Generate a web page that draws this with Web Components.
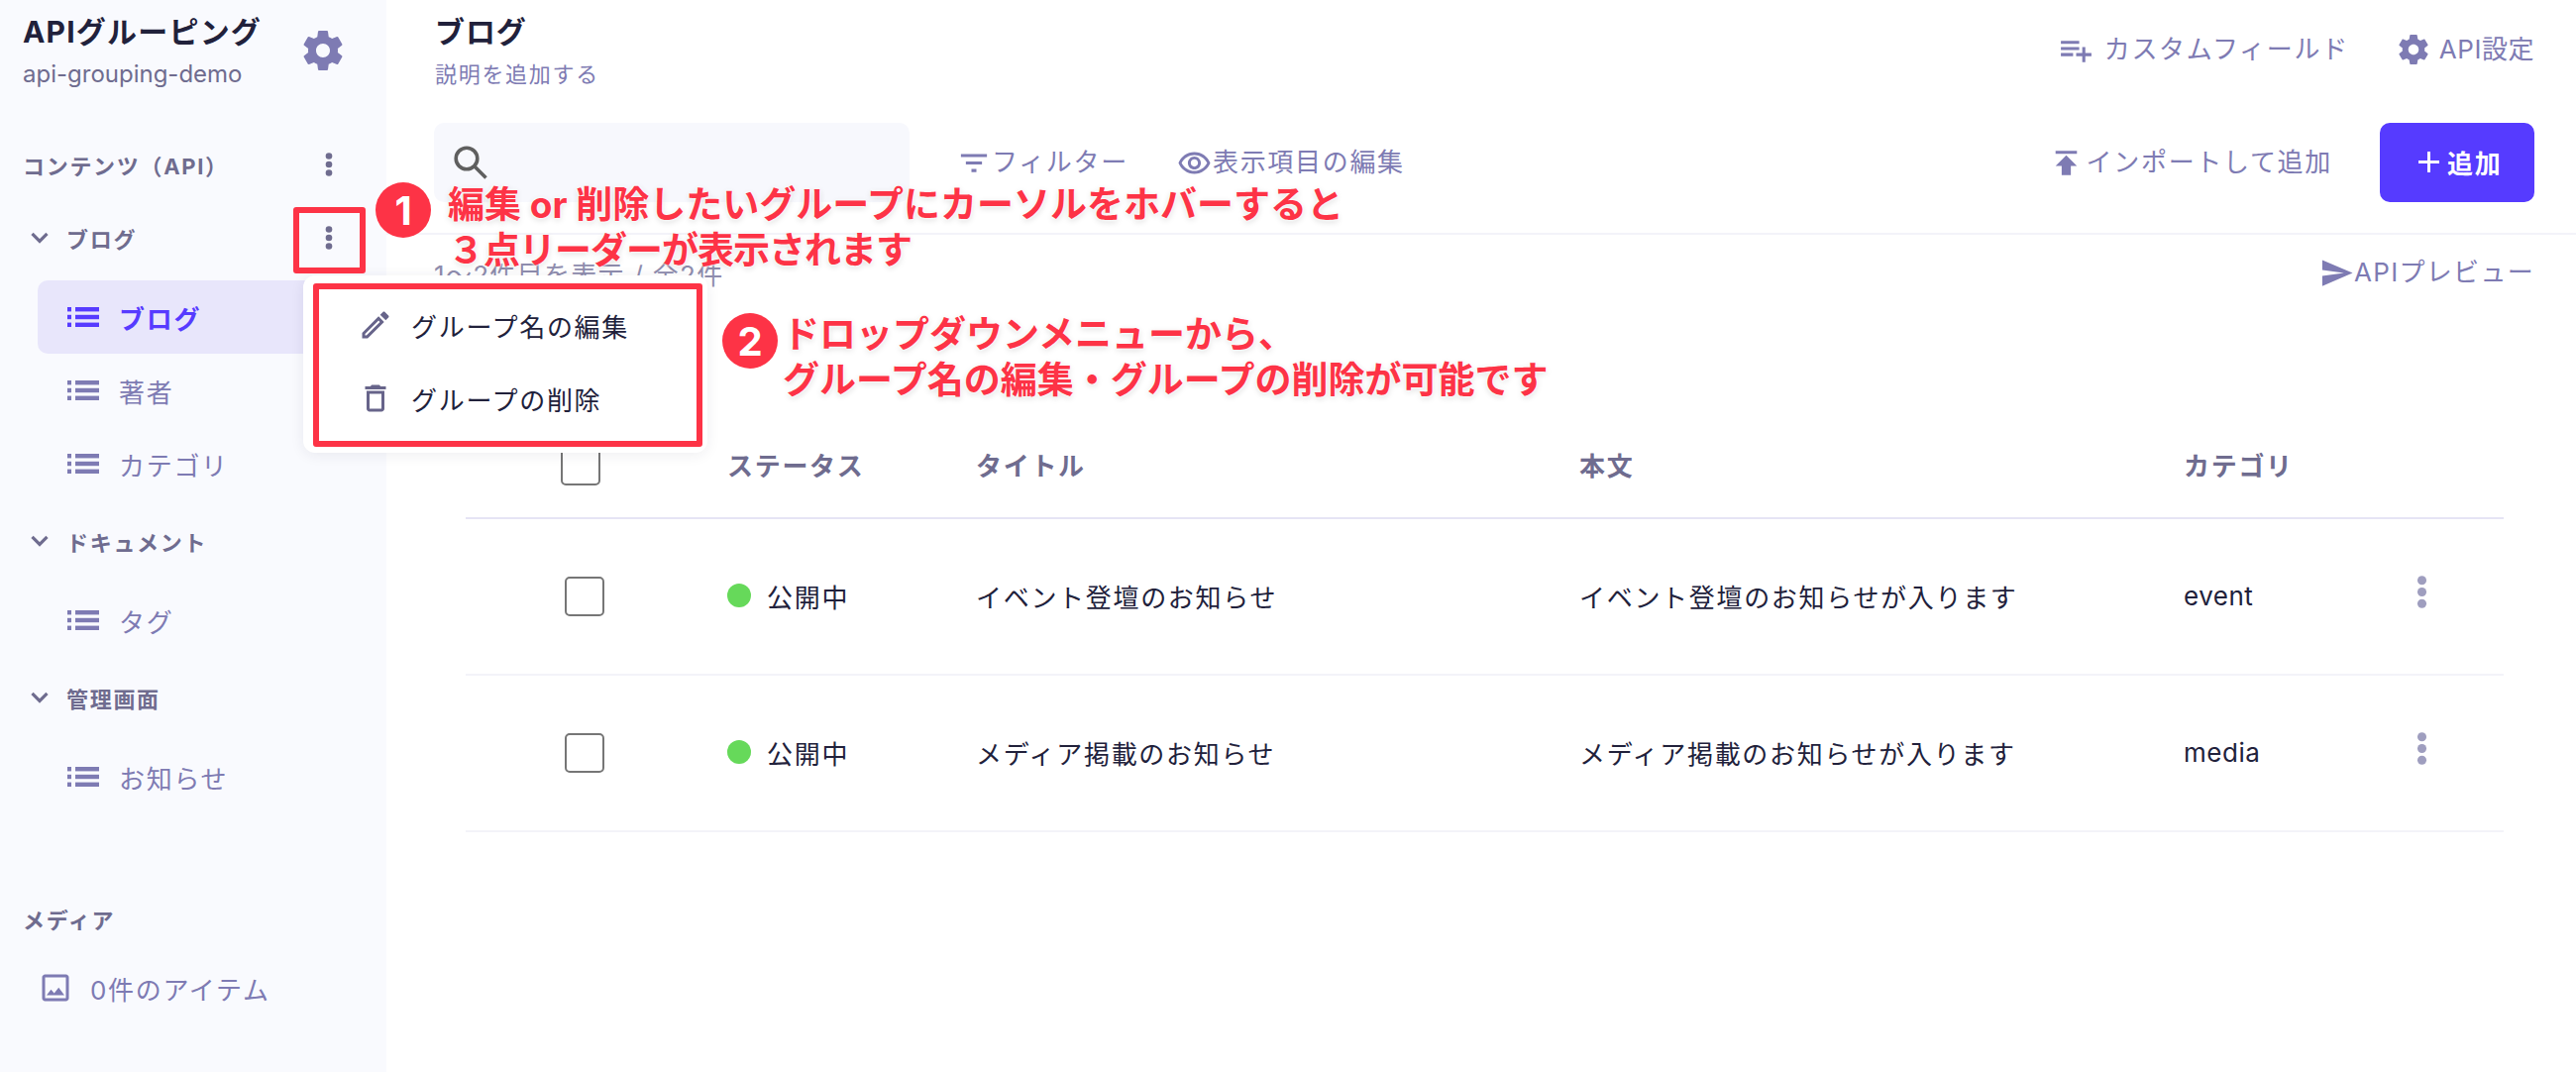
<!DOCTYPE html>
<html lang="ja">
<head>
<meta charset="utf-8">
<title>ブログ</title>
<style>
  html, body { margin: 0; height: 100%; }
  body {
    background: #fff;
    color: #21213b;
    font-family: Inter, "Noto Sans CJK JP", sans-serif;
    font-size: 26px;
    letter-spacing: .065em;
    overflow: hidden;
  }
</style>
</head>
<body>
<app-shell>
  <api-sidebar slot="side"></api-sidebar>
  <page-head slot="main"></page-head>
  <list-toolbar slot="main"></list-toolbar>
  <list-meta slot="main"></list-meta>
  <content-table slot="main"></content-table>

  <group-menu slot="over"></group-menu>
  <red-frame slot="over" style="left:296px;top:209px;width:73px;height:67px"></red-frame>
  <red-frame slot="over" style="left:316px;top:286px;width:393px;height:165px"></red-frame>
  <step-badge slot="over" style="left:379px;top:184px">1</step-badge>
  <step-badge slot="over" style="left:729px;top:316px">2</step-badge>
  <call-out slot="over" style="left:452px;top:184px">編集 or 削除したいグループにカーソルをホバーすると<br><span style="letter-spacing:-1px">３点リーダーが表示されます</span></call-out>
  <call-out slot="over" style="left:790px;top:315px">ドロップダウンメニューから、<br>グループ名の編集・グループの削除が可能です</call-out>
</app-shell>

<script>
const ICONS = {
  gear: '<path d="M19.43 12.98c.04-.32.07-.64.07-.98s-.03-.66-.07-.98l2.11-1.65c.19-.15.24-.42.12-.64l-2-3.46c-.12-.22-.39-.3-.61-.22l-2.49 1c-.52-.4-1.08-.73-1.69-.98l-.38-2.65C14.46 2.18 14.25 2 14 2h-4c-.25 0-.46.18-.49.42l-.38 2.65c-.61.25-1.17.59-1.69.98l-2.49-1c-.23-.09-.49 0-.61.22l-2 3.46c-.13.22-.07.49.12.64l2.11 1.65c-.04.32-.07.65-.07.98s.03.66.07.98l-2.11 1.65c-.19.15-.24.42-.12.64l2 3.46c.12.22.39.3.61.22l2.49-1c.52.4 1.08.73 1.69.98l.38 2.65c.03.24.24.42.49.42h4c.25 0 .46-.18.49-.42l.38-2.65c.61-.25 1.17-.59 1.69-.98l2.49 1c.23.09.49 0 .61-.22l2-3.46c.12-.22.07-.49-.12-.64l-2.11-1.65zM12 15.5c-1.93 0-3.5-1.57-3.5-3.5s1.57-3.5 3.5-3.5 3.5 1.57 3.5 3.5-1.57 3.5-3.5 3.5z"/>',
  eye: '<path d="M12 6.5c3.79 0 7.17 2.13 8.82 5.5-1.65 3.37-5.02 5.5-8.82 5.5S4.83 15.37 3.18 12C4.83 8.63 8.21 6.5 12 6.5m0-2C7 4.5 2.73 7.61 1 12c1.73 4.39 6 7.5 11 7.5s9.27-3.11 11-7.5c-1.73-4.39-6-7.5-11-7.5zm0 5c1.38 0 2.5 1.12 2.5 2.5s-1.12 2.5-2.5 2.5-2.5-1.12-2.5-2.5 1.12-2.5 2.5-2.5m0-2c-2.48 0-4.5 2.02-4.5 4.5s2.02 4.5 4.5 4.5 4.5-2.02 4.5-4.5-2.02-4.5-4.5-4.5z"/>',
  fields: '<path d="M14 10H2v2h12v-2zm0-4H2v2h12V6zm4 8v-4h-2v4h-4v2h4v4h2v-4h4v-2h-4zM2 16h8v-2H2v2z"/>',
  publish: '<path d="M5 4v2h14V4H5zm0 10h4v6h6v-6h4l-7-7-7 7z"/>',
  send: '<path d="M2.01 21L23 12 2.01 3 2 10l15 2-15 2z"/>',
  pencil: '<path d="M14.06 9.02l.92.92L5.92 19H5v-.92l9.06-9.06M17.66 3c-.25 0-.51.1-.7.29l-1.83 1.83 3.75 3.75 1.83-1.83c.39-.39.39-1.02 0-1.41l-2.34-2.34c-.2-.2-.45-.29-.71-.29zm-3.6 3.19L3 17.25V21h3.75L17.81 9.94l-3.75-3.75z"/>',
  trash: '<path d="M16 9v10H8V9h8m-1.5-6h-5l-1 1H5v2h14V4h-3.5l-1-1zM18 7H6v12c0 1.1.9 2 2 2h8c1.1 0 2-.9 2-2V7z"/>',
  image: '<path d="M19 5v14H5V5h14m0-2H5c-1.1 0-2 .9-2 2v14c0 1.1.9 2 2 2h14c1.1 0 2-.9 2-2V5c0-1.1-.9-2-2-2z"/><path d="M14.14 11.86l-3 3.87L9 13.14 6 17h12l-3.86-5.14z"/>',
  filter: '<path d="M1.5 5.2h21v2.4h-21zM5.5 11.2h13v2.4h-13zM10 17.2h4v2.6h-4z"/>'
}

class UiIcon extends HTMLElement {
  constructor () {
    super()
    this.shadow = this.attachShadow({ mode: 'open' })
  }

  connectedCallback () {
    const size = this.getAttribute('size') || 36
    this.shadow.innerHTML = `
      <style>
        :host { display: inline-flex; flex: none; color: inherit; }
        svg { display: block; fill: currentColor; }
      </style>
      <svg width="${size}" height="${size}" viewBox="0 0 24 24">${ICONS[this.getAttribute('name')]}</svg>`
  }
}

class KebabDots extends HTMLElement {
  constructor () {
    super()
    this.attachShadow({ mode: 'open' }).innerHTML = `
      <style>
        :host { display: block; flex: none; width: 8px; height: 24px; }
        svg { display: block; width: 100%; height: 100%; fill: currentColor; }
      </style>
      <svg viewBox="0 0 8 24">
        <circle cx="4" cy="3.5" r="3.3"/><circle cx="4" cy="12" r="3.3"/><circle cx="4" cy="20.5" r="3.3"/>
      </svg>`
  }
}

class AppShell extends HTMLElement {
  constructor () {
    super()
    this.attachShadow({ mode: 'open' }).innerHTML = `
      <style>
        :host { display: grid; grid-template-columns: 390px 1fr; height: 1082px; position: relative; }
        main { display: flex; flex-direction: column; min-width: 0; }
      </style>
      <slot name="side"></slot>
      <main><slot name="main"></slot></main>
      <slot name="over"></slot>`
  }
}

class ApiSidebar extends HTMLElement {
  constructor () {
    super()
    this.attachShadow({ mode: 'open' }).innerHTML = `
      <style>
        :host { display: block; background: #f9fafe; height: 1082px; }
        .head { display: flex; justify-content: space-between; align-items: center; padding: 12px 40px 0 23px; height: 81px; margin-bottom: 43px; }
        .name { font-size: 30px; font-weight: 700; line-height: 40px; color: #21213b; letter-spacing: .04em; }
        .id { font-size: 24px; line-height: 36px; margin-top: 5px; color: #6f6c8f; letter-spacing: 0; }
        .head ui-icon { color: #7e7bb3; margin-top: -4px; }
        .first { margin-top: 14px; }
        .media { margin-top: 76px; }
      </style>
      <div class="head">
        <div><div class="name">APIグルーピング</div><div class="id">api-grouping-demo</div></div>
        <ui-icon name="gear" size="48"></ui-icon>
      </div>
      <side-heading kebab>コンテンツ（API）</side-heading>
      <side-group class="first" label="ブログ" kebab>
        <side-item active>ブログ</side-item>
        <side-item>著者</side-item>
        <side-item>カテゴリ</side-item>
      </side-group>
      <side-group label="ドキュメント">
        <side-item>タグ</side-item>
      </side-group>
      <side-group label="管理画面">
        <side-item>お知らせ</side-item>
      </side-group>
      <side-heading class="media">メディア</side-heading>
      <media-link>0件のアイテム</media-link>`
  }
}

class SideHeading extends HTMLElement {
  constructor () {
    super()
    this.shadow = this.attachShadow({ mode: 'open' })
  }

  connectedCallback () {
    this.shadow.innerHTML = `
      <style>
        :host { display: flex; justify-content: space-between; align-items: center; height: 60px; padding: 0 54px 0 23px; font-size: 22px; font-weight: 700; color: #6f6c8f; }
      </style>
      <span><slot></slot></span>
      ${this.hasAttribute('kebab') ? '<kebab-dots></kebab-dots>' : ''}`
  }
}

class SideGroup extends HTMLElement {
  constructor () {
    super()
    this.shadow = this.attachShadow({ mode: 'open' })
  }

  connectedCallback () {
    this.shadow.innerHTML = `
      <style>
        :host { display: block; }
        .row { display: flex; align-items: center; height: 60px; padding: 0 54px 0 31px; font-size: 22px; font-weight: 700; color: #6f6c8f; }
        .row svg { flex: none; margin-right: 18px; }
        .row span { flex: 1; }
        .list { margin: 13px 0 11px; }
      </style>
      <div class="row">
        <svg width="18" height="12" viewBox="0 0 18 12"><path d="M1.5 1.8 9 9.4l7.5-7.6" fill="none" stroke="currentColor" stroke-width="3.2"/></svg>
        <span>${this.getAttribute('label')}</span>
        ${this.hasAttribute('kebab') ? '<kebab-dots></kebab-dots>' : ''}
      </div>
      <div class="list"><slot></slot></div>`
  }
}

class SideItem extends HTMLElement {
  constructor () {
    super()
    this.attachShadow({ mode: 'open' }).innerHTML = `
      <style>
        :host { display: flex; align-items: center; gap: 20px; height: 74px; margin: 0 20px 0 38px; padding-left: 30px; border-radius: 10px; color: #7e7bb3; }
        :host([active]) { background: #e8e6fb; color: #563bff; font-weight: 700; }
        svg { flex: none; display: block; fill: currentColor; }
      </style>
      <svg width="32" height="20" viewBox="0 0 32 20">
        <rect width="4" height="4.4"/><rect y="7.8" width="4" height="4.4"/><rect y="15.6" width="4" height="4.4"/>
        <rect x="8" width="24" height="4.4"/><rect x="8" y="7.8" width="24" height="4.4"/><rect x="8" y="15.6" width="24" height="4.4"/>
      </svg>
      <span><slot></slot></span>`
  }
}

class MediaLink extends HTMLElement {
  constructor () {
    super()
    this.attachShadow({ mode: 'open' }).innerHTML = `
      <style>
        :host { display: flex; align-items: center; gap: 17px; height: 74px; margin-top: 3px; padding-left: 38px; color: #7e7bb3; }
      </style>
      <ui-icon name="image" size="36"></ui-icon>
      <span><slot></slot></span>`
  }
}

class PageHead extends HTMLElement {
  constructor () {
    super()
    this.attachShadow({ mode: 'open' }).innerHTML = `
      <style>
        :host { display: flex; justify-content: space-between; height: 124px; box-sizing: border-box; padding: 12px 42px 0 49px; }
        h1 { margin: 0; font-size: 30px; line-height: 40px; font-weight: 700; color: #21213b; letter-spacing: .03em; }
        p { margin: 5px 0 0; font-size: 22px; line-height: 36px; color: #7e7bb3; }
        .links { display: flex; align-items: center; gap: 47px; height: 76px; color: #7e7bb3; }
        .tight { letter-spacing: .02em; }
      </style>
      <div><h1>ブログ</h1><p>説明を追加する</p></div>
      <div class="links">
        <icon-link icon="fields" size="37" gap="10">カスタムフィールド</icon-link>
        <icon-link class="tight" icon="gear" size="36" gap="8">API設定</icon-link>
      </div>`
  }
}

class IconLink extends HTMLElement {
  constructor () {
    super()
    this.shadow = this.attachShadow({ mode: 'open' })
  }

  connectedCallback () {
    this.shadow.innerHTML = `
      <style>
        :host { display: inline-flex; align-items: center; gap: ${this.getAttribute('gap') || 0}px; color: #7e7bb3; font-size: 26px; line-height: 36px; }
      </style>
      <ui-icon name="${this.getAttribute('icon')}" size="${this.getAttribute('size')}"></ui-icon>
      <span><slot></slot></span>`
  }
}

class ListToolbar extends HTMLElement {
  constructor () {
    super()
    this.attachShadow({ mode: 'open' }).innerHTML = `
      <style>
        :host { display: flex; align-items: center; box-sizing: content-box; height: 80px; padding: 0 42px 31px 48px; border-bottom: 2px solid #f3f3f9; }
        .search { width: 480px; height: 80px; box-sizing: border-box; padding-left: 20px; display: flex; align-items: center; background: #f7f8fd; border-radius: 10px; margin-right: 50px; }
        .filters { display: flex; gap: 49px; }
        .push { margin-left: auto; margin-right: 48px; }
        button { all: unset; box-sizing: border-box; width: 156px; height: 80px; padding: 0 0 2px 39px; display: flex; align-items: center; gap: 8px; background: #563bff; border-radius: 10px; color: #fff; font: inherit; font-weight: 700; }
        button svg { flex: none; }
      </style>
      <div class="search">
        <svg width="34" height="34" viewBox="0 0 34 34" fill="none" stroke="#5f5f5f" stroke-width="3.6"><circle cx="13" cy="13" r="10.8"/><path d="M21 21 32.5 32.5"/></svg>
      </div>
      <div class="filters">
        <icon-link icon="filter" size="30" gap="3">フィルター</icon-link>
        <icon-link icon="eye" size="35" gap="1">表示項目の編集</icon-link>
      </div>
      <icon-link class="push" icon="publish" size="37" gap="2">インポートして追加</icon-link>
      <button><svg width="21" height="21" viewBox="0 0 21 21"><path d="M10.5 0v21M0 10.5h21" stroke="#fff" stroke-width="3"/></svg>追加</button>`
  }
}

class ListMeta extends HTMLElement {
  constructor () {
    super()
    this.attachShadow({ mode: 'open' }).innerHTML = `
      <style>
        :host { display: flex; justify-content: space-between; align-items: center; height: 76px; padding: 0 42px 0 48px; letter-spacing: .05em; }
        span { color: #8f8dae; }
      </style>
      <span>1〜2件目を表示 / 全2件</span>
      <icon-link icon="send" size="35" gap="0">APIプレビュー</icon-link>`
  }
}

class ContentTable extends HTMLElement {
  constructor () {
    super()
    this.attachShadow({ mode: 'open' }).innerHTML = `
      <style>
        :host { display: block; margin: 104px 73px 0 80px; }
      </style>
      <table-row head>
        <span>ステータス</span><span>タイトル</span><span>本文</span><span>カテゴリ</span>
      </table-row>
      <table-row>
        <status-dot>公開中</status-dot><span>イベント登壇のお知らせ</span><span>イベント登壇のお知らせが入ります</span><span>event</span>
      </table-row>
      <table-row>
        <status-dot>公開中</status-dot><span>メディア掲載のお知らせ</span><span>メディア掲載のお知らせが入ります</span><span>media</span>
      </table-row>`
  }
}

class TableRow extends HTMLElement {
  constructor () {
    super()
    this.shadow = this.attachShadow({ mode: 'open' })
  }

  connectedCallback () {
    const head = this.hasAttribute('head')
    this.shadow.innerHTML = `
      <style>
        :host { display: grid; grid-template-columns: 264px 251px 609px 610px 216px 50px 1fr; align-items: center; height: 154px; padding-bottom: 2px; border-bottom: 2px solid #f3f3f9; }
        :host([head]) { height: 103px; border-bottom-color: #e6e4f5; font-weight: 700; color: #6f6c8f; }
        ::slotted(*) { min-width: 0; white-space: nowrap; }
        :host(:not([head])) ::slotted(span:last-child) { letter-spacing: .02em; }
        input { appearance: none; display: block; box-sizing: border-box; width: 40px; height: 40px; margin: 2px 0 0 ${head ? 96 : 100}px; background: #fff; border: 2px solid #767676; border-radius: 5px; }
        kebab-dots { color: #9f9ebf; width: 11px; height: 33px; margin: -8px 0 0 19px; }
      </style>
      <div><input type="checkbox"></div>
      <slot></slot>
      ${head ? '' : '<kebab-dots></kebab-dots>'}`
  }
}

class StatusDot extends HTMLElement {
  constructor () {
    super()
    this.attachShadow({ mode: 'open' }).innerHTML = `
      <style>
        :host { display: flex; align-items: center; gap: 16px; }
        i { width: 24px; height: 24px; border-radius: 50%; background: #66d95a; }
      </style>
      <i></i><span><slot></slot></span>`
  }
}

class GroupMenu extends HTMLElement {
  constructor () {
    super()
    this.attachShadow({ mode: 'open' }).innerHTML = `
      <style>
        :host { position: absolute; left: 306px; top: 278px; width: 408px; height: 179px; box-sizing: border-box; padding: 13px 0 0 55px; background: #fff; border-radius: 12px; box-shadow: 0 2px 14px rgba(33, 33, 59, .08); color: #21213b; }
        div { display: flex; align-items: center; gap: 18px; height: 74px; }
        ui-icon { color: #67648a; }
      </style>
      <div><ui-icon name="pencil" size="36"></ui-icon>グループ名の編集</div>
      <div><ui-icon name="trash" size="36"></ui-icon>グループの削除</div>`
  }
}

class RedFrame extends HTMLElement {
  constructor () {
    super()
    this.attachShadow({ mode: 'open' }).innerHTML = `
      <style>
        :host { position: absolute; box-sizing: border-box; border: 6px solid #fd3346; border-radius: 3px; }
      </style>`
  }
}

class StepBadge extends HTMLElement {
  constructor () {
    super()
    this.attachShadow({ mode: 'open' }).innerHTML = `
      <style>
        :host { position: absolute; display: flex; align-items: center; justify-content: center; width: 56px; height: 56px; border-radius: 50%; background: #fd3346; color: #fff; font-size: 40px; font-weight: 700; letter-spacing: 0; box-shadow: 0 0 5px rgba(255, 255, 255, .9); }
      </style>
      <slot></slot>`
  }
}

class CallOut extends HTMLElement {
  constructor () {
    super()
    this.attachShadow({ mode: 'open' }).innerHTML = `
      <style>
        :host { position: absolute; white-space: nowrap; color: #fd3346; font-size: 37px; font-weight: 700; line-height: 46px; letter-spacing: 0; text-shadow: 0 0 3px #fff, 0 0 3px #fff, 0 2px 6px rgba(0, 0, 0, .15); }
      </style>
      <slot></slot>`
  }
}

customElements.define('ui-icon', UiIcon)
customElements.define('kebab-dots', KebabDots)
customElements.define('side-heading', SideHeading)
customElements.define('side-item', SideItem)
customElements.define('side-group', SideGroup)
customElements.define('media-link', MediaLink)
customElements.define('api-sidebar', ApiSidebar)
customElements.define('icon-link', IconLink)
customElements.define('page-head', PageHead)
customElements.define('list-toolbar', ListToolbar)
customElements.define('list-meta', ListMeta)
customElements.define('status-dot', StatusDot)
customElements.define('table-row', TableRow)
customElements.define('content-table', ContentTable)
customElements.define('group-menu', GroupMenu)
customElements.define('red-frame', RedFrame)
customElements.define('step-badge', StepBadge)
customElements.define('call-out', CallOut)
customElements.define('app-shell', AppShell)
</script>
</body>
</html>
